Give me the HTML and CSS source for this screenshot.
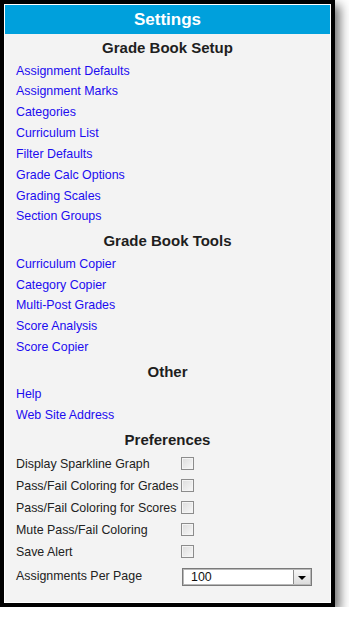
FILE: index.html
```html
<!DOCTYPE html>
<html lang="en">
<head>
  <meta charset="UTF-8" />
  <meta name="viewport" content="width=device-width, initial-scale=1.0"/>
  <title>Settings</title>
  <link rel="stylesheet" href="styles.css">
</head>
<body>

  <div class="panel">
    <div class="panel-title">Settings</div>

    <div class="panel-body">
      <h3>Grade Book Setup</h3>
      <ul class="links">
        <li><a href="#">Assignment Defaults</a></li>
        <li><a href="#">Assignment Marks</a></li>
        <li><a href="#">Categories</a></li>
        <li><a href="#">Curriculum List</a></li>
        <li><a href="#">Filter Defaults</a></li>
        <li><a href="#">Grade Calc Options</a></li>
        <li><a href="#">Grading Scales</a></li>
        <li><a href="#">Section Groups</a></li>
      </ul>

      <h3>Grade Book Tools</h3>
      <ul class="links">
        <li><a href="#">Curriculum Copier</a></li>
        <li><a href="#">Category Copier</a></li>
        <li><a href="#">Multi-Post Grades</a></li>
        <li><a href="#">Score Analysis</a></li>
        <li><a href="#">Score Copier</a></li>
      </ul>

      <h3>Other</h3>
      <ul class="links">
        <li><a href="#">Help</a></li>
        <li><a href="#">Web Site Address</a></li>
      </ul>

      <h3>Preferences</h3>
      <div class="prefs">
        <label for="p1">Display Sparkline Graph</label>
        <input type="checkbox" id="p1">
        <label for="p2">Pass/Fail Coloring for Grades</label>
        <input type="checkbox" id="p2">
        <label for="p3">Pass/Fail Coloring for Scores</label>
        <input type="checkbox" id="p3">
        <label for="p4">Mute Pass/Fail Coloring</label>
        <input type="checkbox" id="p4">
        <label for="p5">Save Alert</label>
        <input type="checkbox" id="p5">
        <label class="select-label">Assignments Per Page</label>
        <div class="select">
          <span class="select-value">100</span>
          <span class="select-arrow"></span>
        </div>
      </div>
    </div>
  </div>

</body>
</html>
```

FILE: styles.css
```css
* {
  margin: 0;
  padding: 0;
  box-sizing: border-box;
}

body {
  font-family: 'Liberation Sans', Arial, sans-serif;
  background: #fff;
  color: #222;
}

.panel {
  width: 335px;
  height: 607px;
  border: 4px solid #000;
  background: #f3f3f3;
  box-shadow: inset 0 0 0 1px #fff, 5px 5px 10px rgba(0, 0, 0, 0.55);
  padding: 1px;
}

.panel-title {
  height: 29px;
  line-height: 29px;
  background: #00a0dc;
  color: #fff;
  font-size: 17px;
  font-weight: bold;
  text-align: center;
}

.panel-body {
  padding: 0 0 0 11px;
}

h3 {
  font-size: 15px;
  font-weight: bold;
  line-height: 20px;
  padding: 4px 11px 2.5px 0;
  text-align: center;
  color: #1e1e1e;
}

.links {
  list-style: none;
}

.links li {
  height: 20.85px;
  line-height: 20.85px;
  font-size: 12.4px;
}

.links a {
  color: #1c0cf0;
  text-decoration: none;
}

.links a:hover {
  text-decoration: underline;
}

.prefs {
  display: grid;
  grid-template-columns: 165px auto;
  grid-template-rows: repeat(5, 22px) 24px;
  align-items: center;
  font-size: 12.4px;
  color: #222;
}

.prefs input[type="checkbox"] {
  appearance: none;
  -webkit-appearance: none;
  width: 13px;
  height: 13px;
  border: 1px solid #8c8c8c;
  background: linear-gradient(135deg, #dcdcdc, #f8f8f8);
  box-shadow: inset 0 0 0 1px #f4f4f4;
  justify-self: start;
}

.select-label {
  margin-top: 2px;
}

.select {
  display: flex;
  width: 130px;
  height: 18px;
  margin: 5px 0 0 1px;
  border: 1px solid #7a7a7a;
  box-shadow: inset 0 0 0 1px #b8b8b8;
  background: #fff;
}

.select-value {
  flex: 1;
  padding-left: 8px;
  line-height: 16px;
  font-size: 12.4px;
  color: #111;
}

.select-arrow {
  width: 17px;
  margin: 1px;
  border-left: 1px solid #8c8c8c;
  background: linear-gradient(#f6f6f6, #dcdcdc);
  display: flex;
  align-items: center;
  justify-content: center;
}

.select-arrow::after {
  content: "";
  margin-top: 2px;
  border-left: 4px solid transparent;
  border-right: 4px solid transparent;
  border-top: 4px solid #000;
}
```
